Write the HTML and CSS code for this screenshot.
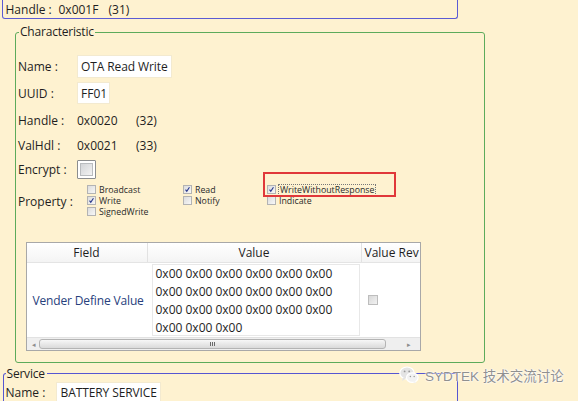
FILE: index.html
```
<!DOCTYPE html>
<html>
<head>
<meta charset="utf-8">
<link rel="stylesheet" href="styles.css">
</head>
<body>
<div class="page">
  <div class="prev-group">
    <span class="plabel">Handle :</span><span class="pval">0x001F</span><span>(31)</span>
  </div>

  <fieldset class="group char">
    <legend>Characteristic</legend>
    <div class="row r-name"><span class="label">Name :</span><span class="textbox tb-name">OTA Read Write</span></div>
    <div class="row r-uuid"><span class="label">UUID :</span><span class="textbox tb-uuid">FF01</span></div>
    <div class="row r-handle"><span class="label">Handle :</span><span class="val">0x0020</span><span>(32)</span></div>
    <div class="row r-valhdl"><span class="label">ValHdl :</span><span class="val">0x0021</span><span>(33)</span></div>
    <div class="row r-enc"><span class="label">Encrypt :</span><span class="bigcb"><span class="bigcb-in"></span></span></div>
    <div class="row r-prop">
      <span class="label">Property :</span>
      <div class="props">
        <div class="prop"><span class="cb"></span><span>Broadcast</span></div>
        <div class="prop"><span class="cb"><svg viewBox="0 0 10 10"><path d="M2.2 5.2 L4 7.6 L7.8 1.8" /></svg></span><span>Read</span></div>
        <div class="prop"><span class="cb"><svg viewBox="0 0 10 10"><path d="M2.2 5.2 L4 7.6 L7.8 1.8" /></svg></span><span class="focus">WriteWithoutResponse</span></div>
        <div class="prop"><span class="cb"><svg viewBox="0 0 10 10"><path d="M2.2 5.2 L4 7.6 L7.8 1.8" /></svg></span><span>Write</span></div>
        <div class="prop"><span class="cb"></span><span>Notify</span></div>
        <div class="prop"><span class="cb"></span><span>Indicate</span></div>
        <div class="prop"><span class="cb"></span><span>SignedWrite</span></div>
      </div>
      <div class="highlight"></div>
    </div>

    <div class="grid">
      <div class="thead">
        <div class="th th-field">Field</div>
        <div class="th th-value">Value</div>
        <div class="th th-rev">Value Rev</div>
      </div>
      <div class="tbody">
        <div class="td td-field">Vender Define Value</div>
        <div class="td td-value">
          <div class="hexbox">
            <div>0x00 0x00 0x00 0x00 0x00 0x00</div>
            <div>0x00 0x00 0x00 0x00 0x00 0x00</div>
            <div>0x00 0x00 0x00 0x00 0x00 0x00</div>
            <div>0x00 0x00 0x00</div>
          </div>
        </div>
        <div class="td td-rev"><span class="cb cb-dis"></span></div>
      </div>
      <div class="hscroll">
        <span class="arrow">&#9666;</span>
        <div class="thumb"><span class="grip"></span></div>
        <span class="arrow">&#9656;</span>
      </div>
    </div>
  </fieldset>

  <fieldset class="group service">
    <legend>Service</legend>
    <div class="row r-sname"><span class="label slabel">Name :</span><span class="textbox tb-sname">BATTERY SERVICE</span></div>
  </fieldset>

  <div class="watermark">
    <svg class="wx" viewBox="0 0 20 18">
      <ellipse cx="8" cy="7" rx="7.2" ry="6" fill="#e4e4e4" stroke="#ffffff" stroke-width="1.2"/>
      <path d="M4 11.5 L3 15 L7 12.6 Z" fill="#e4e4e4"/>
      <circle cx="5.6" cy="5.4" r="0.9" fill="#9a9a9a"/>
      <circle cx="10.2" cy="5.4" r="0.9" fill="#9a9a9a"/>
      <ellipse cx="13.3" cy="11.6" rx="5.8" ry="4.8" fill="#f2f2f2" stroke="#ffffff" stroke-width="1.2"/>
      <path d="M16 15 L17.4 17.6 L13.8 16 Z" fill="#f2f2f2"/>
      <circle cx="11.4" cy="10.6" r="0.75" fill="#9a9a9a"/>
      <circle cx="15.2" cy="10.6" r="0.75" fill="#9a9a9a"/>
    </svg>
    <span class="wtext">SYDTEK 技术交流讨论</span>
  </div>
</div>
</body>
</html>
```

FILE: styles.css
```
html, body {
  margin: 0;
  padding: 0;
}
body {
  background: #fef2d0;
  font-family: "Open Sans", "Noto Sans", sans-serif;
  font-size: 12px;
  color: #1e1e1e;
}
.page {
  position: relative;
  width: 578px;
  height: 401px;
  overflow: hidden;
  white-space: nowrap;
}

/* previous group (clipped at top) */
.prev-group {
  margin-left: 2px;
  width: 456px;
  height: 19px;
  box-sizing: border-box;
  border: 1.5px solid #5b5bd4;
  border-top: none;
  border-radius: 0 0 3px 3px;
  display: flex;
  align-items: center;
  padding-left: 2.5px;
}
.plabel { width: 53px; flex: none; }
.pval { width: 50px; flex: none; }

/* group boxes */
.group {
  margin: 0;
  min-width: 0;
  box-sizing: border-box;
  border-radius: 3px;
}
.group legend {
  line-height: 16px;
  padding: 0 1px;
  margin-left: 1px;
  letter-spacing: -0.2px;
}
.char {
  margin: 5px 0 0 15px;
  width: 470px;
  border: 1.5px solid #5dab5b;
  padding: 13px 0 10.5px 2px;
}
.service {
  margin: 4px 0 0 3px;
  width: 455px;
  height: 60px;
  border: 1.5px solid #5656d2;
  border-bottom: none;
  padding: 0 0 0 1.5px;
}
.service legend {
  line-height: 14px;
  margin-left: 0;
  padding: 0 2px 0 1px;
}

/* rows */
.row {
  display: flex;
  align-items: center;
  position: relative;
}
.label { width: 59px; flex: none; }
.slabel { width: 50px; }
.r-name { height: 26px; }
.r-uuid { height: 28px; }
.r-handle { height: 26px; }
.r-valhdl { height: 24px; }
.r-enc { height: 24px; }
.r-prop { height: 40px; }
.r-sname { height: 22px; margin-top: 1px; }

.val { width: 59px; flex: none; }

.textbox {
  background: #ffffff;
  height: 23px;
  box-sizing: border-box;
  display: flex;
  align-items: center;
  padding: 0 3px;
  border: 1px solid #f3ead0;
  white-space: nowrap;
  overflow: hidden;
}
.tb-name { width: 95px; padding: 0 2px 0 3px; letter-spacing: -0.1px; }
.tb-uuid { width: 33px; height: 22px; }
.tb-sname { width: 105px; height: 22px; padding-left: 4px; letter-spacing: -0.1px; }

/* big checkbox */
.bigcb {
  width: 19px;
  height: 19px;
  box-sizing: border-box;
  border: 1px solid #8b8d8f;
  background: #ffffff;
  padding: 2px;
  border-radius: 1px;
}
.bigcb-in {
  display: block;
  width: 100%;
  height: 100%;
  box-sizing: border-box;
  border: 1px solid #b9bcbf;
  background: linear-gradient(135deg, #d3d5d8, #f3f3f3);
}

/* properties */
.props {
  margin-left: 10px;
  display: grid;
  grid-template-columns: 96px 84px auto;
  grid-auto-rows: 11px;
  font-size: 8.8px;
  color: #2a2a2a;
  margin-top: -1px;
}
.prop {
  display: flex;
  align-items: center;
  gap: 3px;
  white-space: nowrap;
}
.cb {
  width: 9px;
  height: 9px;
  box-sizing: border-box;
  border: 1px solid #b3b3b3;
  background: linear-gradient(135deg, #dcdcdc, #f7f7f7);
  flex: none;
  display: flex;
}
.cb svg {
  width: 100%;
  height: 100%;
}
.cb path {
  fill: none;
  stroke: #27368c;
  stroke-width: 1.6;
}
.focus {
  outline: 1px dotted #777;
  outline-offset: 0;
  padding: 0 1px;
  line-height: 10px;
}
.highlight {
  position: absolute;
  left: 244.5px;
  top: -9px;
  width: 133px;
  height: 25px;
  box-sizing: border-box;
  border: 2px solid #e0383a;
}

/* data grid */
.grid {
  margin: 21px 0 0 7.5px;
  width: 395px;
  height: 109px;
  box-sizing: border-box;
  border: 1px solid #a8a8a8;
  background: #ffffff;
  overflow: hidden;
  display: flex;
  flex-direction: column;
}
.thead {
  display: flex;
  height: 20px;
  flex: none;
  box-sizing: border-box;
  background: linear-gradient(#ffffff, #f4f4f4);
  border-bottom: 1px solid #e4e4e4;
}
.th {
  line-height: 19px;
  box-sizing: border-box;
  border-right: 1px solid #e2e2e2;
  flex: none;
  white-space: nowrap;
}
.th-field { width: 121px; text-align: center; }
.th-value { width: 214px; text-align: center; }
.th-rev { width: 120px; padding-left: 3px; border-right: none; }

.tbody {
  display: flex;
  height: 74px;
  flex: none;
}
.td {
  flex: none;
  box-sizing: border-box;
}
.td-field {
  width: 121px;
  display: flex;
  align-items: center;
  padding-left: 6px;
  color: #27407c;
  letter-spacing: -0.15px;
}
.td-value {
  width: 214px;
  padding: 1px 2px 1px 4px;
}
.hexbox {
  height: 100%;
  box-sizing: border-box;
  border: 1px solid #e8e8e8;
  padding: 0 3px;
  line-height: 18px;
  white-space: nowrap;
}
.td-rev {
  width: 60px;
  display: flex;
  align-items: center;
  padding-left: 6px;
}
.cb-dis {
  width: 10px;
  height: 10px;
  border-color: #bdbdbd;
  background: linear-gradient(135deg, #d8d8d8, #f2f2f2);
}

.hscroll {
  flex: 1;
  display: flex;
  align-items: center;
  background: #efefef;
  border-top: 1px solid #e2e2e2;
  padding: 0 3px;
  gap: 0;
}
.arrow {
  font-size: 7px;
  color: #8d8d8d;
  width: 9px;
  text-align: center;
  flex: none;
}
.thumb {
  width: 347px;
  height: 10px;
  box-sizing: border-box;
  border: 1px solid #b4b4b4;
  border-radius: 3px;
  background: linear-gradient(#f7f7f7, #dadada);
  display: flex;
  align-items: center;
  justify-content: center;
  margin-right: 19px;
}
.grip {
  width: 5px;
  height: 4px;
  background: repeating-linear-gradient(90deg, #6a6a6a 0 1px, transparent 1px 2px);
}

/* watermark */
.watermark {
  position: absolute;
  left: 399px;
  top: 365px;
  display: flex;
  align-items: center;
  gap: 6px;
}
.wx {
  width: 20px;
  height: 18px;
}
.wtext {
  font-family: "Liberation Sans", "Noto Sans CJK SC", sans-serif;
  font-size: 13.5px;
  color: #909090;
  text-shadow: 0 0 1px #fff, 0 0 2px #fff, 0 0 2px #fff;
}
```
